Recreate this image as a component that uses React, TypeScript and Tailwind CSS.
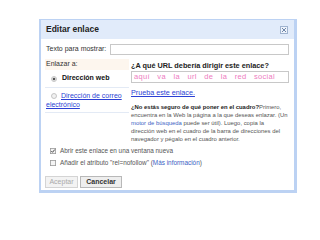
import React from "react";

const font = { fontFamily: '"Liberation Sans", Arial, sans-serif' };

function Radio({ checked }: { checked?: boolean }) {
  return (
    <svg width="6" height="6" viewBox="0 0 6 6" className="shrink-0">
      <circle cx="3" cy="3" r="2.5" fill="#f2f2f2" stroke="#b9b9b9" strokeWidth="0.8" />
      {checked && <circle cx="3" cy="3" r="1.3" fill="#555" />}
    </svg>
  );
}

function Check({ checked }: { checked?: boolean }) {
  return (
    <svg width="6" height="6" viewBox="0 0 6 6" className="shrink-0">
      <rect x="0.4" y="0.4" width="5.2" height="5.2" fill="#f4f4f4" stroke="#9a9a9a" strokeWidth="0.8" />
      {checked && <path d="M1.3 3.1 L2.5 4.3 L4.8 1.5" fill="none" stroke="#333" strokeWidth="0.9" />}
    </svg>
  );
}

export default function App() {
  const words = ["aquí", "va", "la", "url", "de", "la", "red", "social"];
  return (
    <div className="w-[320px] h-[240px] bg-white overflow-hidden" style={font}>
      <div className="ml-[39px] mt-[19px] w-[258px] h-[174px] border-l-2 border-t border-r-[3px] border-b-[3px] border-[#bcd2f3] bg-white flex flex-col">
        {/* title bar */}
        <div className="h-[19px] bg-[#e1ebfa] flex items-center justify-between pl-[5px] pr-[6px]">
          <span className="text-[8.5px] font-bold text-[#222]">Editar enlace</span>
          <span className="w-[8px] h-[8px] border border-[#9fb3cf] bg-[#eef3fb] flex items-center justify-center">
            <svg width="6" height="6" viewBox="0 0 6 6">
              <path d="M1 1 L5 5 M5 1 L1 5" stroke="#6f86a8" strokeWidth="1" />
            </svg>
          </span>
        </div>

        {/* texto para mostrar */}
        <div className="flex items-center mt-[5px] pl-[5px] pr-[5px] h-[11px]">
          <span className="text-[7px] text-[#333] w-[64px] shrink-0">Texto para mostrar:</span>
          <div className="flex-1 h-[11px] border border-[#c8c8c8] bg-white" />
        </div>

        {/* link target columns */}
        <div className="flex mt-[4px] pl-[4px] pr-[5px]">
          <div className="w-[84px] shrink-0 flex flex-col">
            <div className="h-[11px] bg-[#fdf6ee] flex items-center pl-[1px] text-[7px] text-[#333]">Enlazar a:</div>
            <div className="h-[18px] flex items-center gap-[5px] pl-[6px] border-b border-[#e3eaf5]">
              <Radio checked />
              <span className="text-[7px] font-bold text-[#111]">Dirección web</span>
            </div>
            <div className="h-[25px] border-b border-[#e3eaf5] pt-[3px] text-[7px] leading-[9px] text-[#2b3fd4] pl-[1px]">
              <span className="inline-flex items-center mr-[4px] ml-[5px] align-middle">
                <Radio />
              </span>
              <span className="underline">Dirección de correo electrónico</span>
            </div>
          </div>

          <div className="flex-1 flex flex-col pl-[2px]">
            <div className="h-[10px] mt-[2px] flex items-center text-[7.3px] font-bold text-[#222] whitespace-nowrap">
              ¿A qué URL debería dirigir este enlace?
            </div>
            <div className="h-[12px] border border-[#c8c8c8] flex items-center justify-between pl-[2px] pr-[13px] text-[7.5px] text-[#ee7dbf] tracking-[0.3px]">
              {words.map((w, i) => (
                <span key={i}>{w}</span>
              ))}
            </div>
            <div className="mt-[6px] h-[9px] flex items-center text-[7.2px] text-[#2b3fd4] underline">Prueba este enlace.</div>
            <div className="mt-[5px] flex flex-col text-[5.9px] leading-[8px] text-[#555] whitespace-nowrap">
              <div>
                <span className="font-bold text-[#222]">¿No estás seguro de qué poner en el cuadro?</span>Primero,
              </div>
              <div>encuentra en la Web la página a la que deseas enlazar. (Un</div>
              <div>
                <span className="text-[#3b63c4]">motor de búsqueda</span> puede ser útil). Luego, copia la
              </div>
              <div>dirección web en el cuadro de la barra de direcciones del</div>
              <div>navegador y pégalo en el cuadro anterior.</div>
            </div>
          </div>
        </div>

        {/* options */}
        <div className="mt-[4px] pl-[9px] flex flex-col gap-[4px] text-[6.4px] text-[#555]">
          <div className="h-[8px] flex items-center gap-[4px]">
            <Check checked />
            <span>Abrir este enlace en una ventana nueva</span>
          </div>
          <div className="h-[8px] flex items-center gap-[4px]">
            <Check />
            <span>
              Añadir el atributo "rel=nofollow" (<span className="text-[#3b63c4]">Más información</span>)
            </span>
          </div>
        </div>

        {/* buttons */}
        <div className="mt-[9px] pl-[4px] flex gap-[2px]">
          <div className="w-[33px] h-[12px] border border-[#d4d4d4] bg-[#f3f3f3] flex items-center justify-center text-[7px] text-[#aaa]">
            Aceptar
          </div>
          <div className="w-[42px] h-[12px] border border-[#b8b8b8] bg-[#eeeeee] flex items-center justify-center text-[7px] font-bold text-[#333]">
            Cancelar
          </div>
        </div>
      </div>
    </div>
  );
}
